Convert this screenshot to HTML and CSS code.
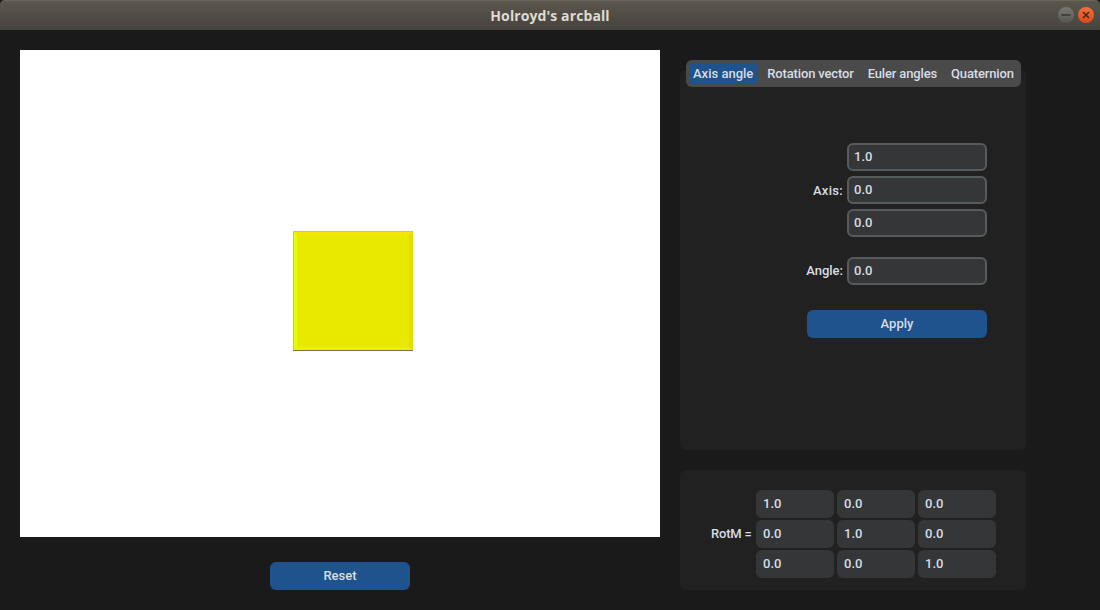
FILE: index.html
```html
<!DOCTYPE html>
<html lang="en">
<head>
	<meta charset="utf-8">
	<title>Holroyd's arcball</title>
	<link rel="stylesheet" href="styles.css">
</head>

<body>
	<div id="titlebar">
		<span class="title">Holroyd's arcball</span>
		<div class="window-buttons">
			<span class="win-btn win-min">
				<svg width="16" height="16" viewBox="0 0 16 16"><path d="M3.500 8h9" stroke="#3a3a36" stroke-width="1.600" fill="none"/></svg>
			</span>
			<span class="win-btn win-close">
				<svg width="16" height="16" viewBox="0 0 16 16"><path d="M5 5l6 6M11 5l-6 6" stroke="#4a2413" stroke-width="1.500" fill="none"/></svg>
			</span>
		</div>
	</div>

	<div id="content">
		<div class="left">
			<svg class="canvas" width="640" height="487" viewBox="0 0 640 487">
				<rect x="273" y="181" width="120" height="120" fill="#e9e900"/>
				<polygon points="273,181 393,181 389,185 277,185" fill="#f5e600"/>
				<polygon points="273,181 277,185 277,297 273,301" fill="#e6ff00"/>
				<polygon points="393,181 389,185 389,297 393,301" fill="#e0e000"/>
				<polygon points="273,301 277,297 389,297 393,301" fill="#eeee00"/>
				<path d="M273.500 300V181.500H393" stroke="#bcbcb0" fill="none"/>
				<path d="M273 300.500H393" stroke="#85704a" fill="none"/>
			</svg>
			<button class="btn reset" type="button">Reset</button>
		</div>

		<div class="right">
			<div class="tabview">
				<div class="tabbar">
					<span class="tab active">Axis angle</span>
					<span class="tab">Rotation vector</span>
					<span class="tab">Euler angles</span>
					<span class="tab">Quaternion</span>
				</div>
				<div class="panel tabpanel">
					<div class="axis-row">
						<label class="lbl axis-lbl">Axis:</label>
						<div class="axis-fields">
							<input class="field" type="text" value="1.0">
							<input class="field" type="text" value="0.0">
							<input class="field" type="text" value="0.0">
						</div>
					</div>
					<div class="angle-row">
						<label class="lbl angle-lbl">Angle:</label>
						<input class="field" type="text" value="0.0">
					</div>
					<button class="btn apply" type="button">Apply</button>
				</div>
			</div>

			<div class="panel matrix">
				<label class="lbl rotm-lbl">RotM =</label>
				<div class="matrix-grid">
					<input class="cell" type="text" value="1.0">
					<input class="cell" type="text" value="0.0">
					<input class="cell" type="text" value="0.0">
					<input class="cell" type="text" value="0.0">
					<input class="cell" type="text" value="1.0">
					<input class="cell" type="text" value="0.0">
					<input class="cell" type="text" value="0.0">
					<input class="cell" type="text" value="0.0">
					<input class="cell" type="text" value="1.0">
				</div>
			</div>
		</div>
	</div>
</body>

</html>
```

FILE: styles.css
```css
html {
	box-sizing: border-box;
}
*,
*::before,
*::after {
	box-sizing: inherit;
}

body {
	background-color: #1a1a1a;
	color: #d6dde6;
	font-family: Roboto, "Liberation Sans", sans-serif;
	font-size: 13px;
	font-weight: 500;
	height: 610px;
	margin: 0;
	overflow: hidden;
	padding: 0;
}

input,
button {
	color: inherit;
	font-family: inherit;
	font-size: inherit;
	font-weight: inherit;
	outline: none;
}

#titlebar {
	align-items: center;
	background: linear-gradient(#5b574e, #45433c);
	border-radius: 5px 5px 0 0;
	border-top: 1px solid #6a665c;
	display: flex;
	height: 30px;
	justify-content: center;
	position: relative;
}

.title {
	color: #dfdbd2;
	font-family: "Open Sans", "Noto Sans", sans-serif;
	font-size: 14px;
	font-weight: 700;
	letter-spacing: 0.1px;
}

.window-buttons {
	display: flex;
	gap: 4px;
	position: absolute;
	right: 6px;
	top: 6px;
}

.win-btn {
	border-radius: 50%;
	display: block;
	height: 16px;
	width: 16px;
}

.win-btn svg {
	display: block;
}

.win-min {
	background: linear-gradient(#7a7870, #565650);
}

.win-close {
	background: linear-gradient(#f0703c, #dd4a1a);
}

#content {
	display: flex;
	padding: 20px 0 0 20px;
}

.left {
	align-items: center;
	display: flex;
	flex-direction: column;
	width: 640px;
}

.canvas {
	background-color: #fff;
	display: block;
}

.btn {
	background-color: #1f538d;
	border: 0;
	border-radius: 6px;
	height: 28px;
	padding: 0 0 2px;
}

.reset {
	margin-top: 25px;
	width: 140px;
}

.right {
	display: flex;
	flex-direction: column;
	gap: 20px;
	margin-left: 20px;
	padding-top: 10px;
	width: 346px;
}

.panel {
	background-color: #212121;
	border-radius: 6px;
}

.tabbar {
	background-color: #4a4a4a;
	border-radius: 6px;
	display: flex;
	height: 27px;
	letter-spacing: -0.15px;
	margin: 0 5px -17px 6px;
	padding: 3px;
	position: relative;
}

.tab {
	align-items: center;
	border-radius: 4px;
	display: flex;
	height: 21px;
	justify-content: center;
	margin-right: 6px;
	padding: 0 4px;
	white-space: nowrap;
}

.tab.active {
	background-color: #1f538d;
	letter-spacing: 0;
}

.tabpanel {
	align-items: flex-end;
	display: flex;
	flex-direction: column;
	height: 380px;
	padding: 73px 39px 0 0;
}

.lbl {
	white-space: nowrap;
}

.axis-row,
.angle-row {
	align-items: center;
	display: flex;
	gap: 4px;
}

.axis-fields {
	display: flex;
	flex-direction: column;
	gap: 5px;
}

.axis-lbl {
	letter-spacing: 0.3px;
}

.angle-row {
	margin-top: 20px;
}

.angle-lbl {
	padding-bottom: 2px;
}

.field {
	background-color: #343638;
	border: 2px solid #565b5e;
	border-radius: 6px;
	height: 28px;
	padding: 0 5px 2px;
	width: 140px;
}

.apply {
	margin-top: 25px;
	width: 180px;
}

.matrix {
	align-items: center;
	display: flex;
	height: 120px;
	padding: 8px 0 0 31px;
}

.rotm-lbl {
	letter-spacing: -0.2px;
	padding-bottom: 2px;
	width: 40px;
}

.matrix-grid {
	display: grid;
	gap: 2px 3px;
	grid-template-columns: repeat(3, 78px);
	margin-left: 5px;
}

.cell {
	background-color: #343638;
	border: 0;
	border-radius: 6px;
	height: 28px;
	padding: 0 7px 2px;
	width: 78px;
}
```
